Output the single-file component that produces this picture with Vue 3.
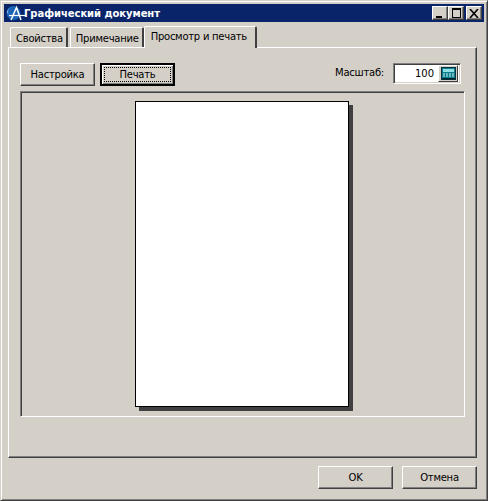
<template>
  <div class="window">
    <div class="titlebar">
      <svg class="logo" width="20" height="16" viewBox="0 0 20 16">
        <circle cx="7.500" cy="8" r="7" fill="#1b63b4" />
        <path d="M1 8a6.500 6.500 0 0 1 6-6.500a5 5 0 0 0-4.500 7z" fill="#7fb8ea" />
        <path d="M5 15L10.500 2.500L15 15" fill="none" stroke="#fff" stroke-width="1.500" />
        <path d="M3 10.500h16" stroke="#fff" stroke-width="1.200" />
      </svg>
      <span class="title">Графический документ</span>
      <div class="caption-btns">
        <button class="cap">
          <svg width="10" height="9" viewBox="0 0 10 9"><path d="M1 7h6v2H1z" fill="#000" /></svg>
        </button>
        <button class="cap">
          <svg width="11" height="10" viewBox="0 0 11 10"><path d="M1 0h9v10H1zM2 2v7h7V2z" fill="#000" fill-rule="evenodd" /></svg>
        </button>
        <button class="cap close">
          <svg width="10" height="9" viewBox="0 0 10 9"><path d="M1 0l8 9M9 0L1 9" stroke="#000" stroke-width="1.600" /></svg>
        </button>
      </div>
    </div>

    <div class="tabs">
      <div v-for="t in tabs" :key="t" class="tab" :class="{ active: t === active }">{{ t }}</div>
    </div>

    <div class="pane">
      <div class="toolbar">
        <button class="btn">Настройка</button>
        <button class="btn default"><span class="focus">Печать</span></button>
        <span class="scale-label">Масштаб:</span>
        <div class="scale">
          <span class="scale-value">100</span>
          <span class="calc">
            <svg width="15" height="13" viewBox="0 0 15 13">
              <rect x="0.500" y="0.500" width="14" height="12" fill="#0b7d8c" stroke="#03303c" />
              <rect x="2" y="2" width="11" height="3" fill="#8fdfe4" />
              <path d="M2 7h2M5 7h2M8 7h2M11 7h2M2 9h2M5 9h2M8 9h2M11 9h2" stroke="#c8f4f4" />
              <path d="M1 11.500h13" stroke="#022" />
            </svg>
          </span>
        </div>
      </div>
      <div class="preview">
        <div class="paper"></div>
      </div>
    </div>

    <div class="footer">
      <button class="btn">OK</button>
      <button class="btn">Отмена</button>
    </div>
  </div>
</template>

<script setup>
const tabs = ['Свойства', 'Примечание', 'Просмотр и печать']
const active = 'Просмотр и печать'
</script>

<style>
html, body { margin: 0; background: #d4d0c8; }
</style>

<style scoped>
.window {
  box-sizing: border-box;
  width: 488px;
  height: 501px;
  background: #d4d0c8;
  border: 1px solid;
  border-color: #d4d0c8 #404040 #404040 #d4d0c8;
  box-shadow: inset 1px 1px 0 #fff, inset -1px -1px 0 #808080;
  padding: 3px 3px 0;
  display: flex;
  flex-direction: column;
  font: 10px "DejaVu Sans", sans-serif;
  letter-spacing: -0.25px;
  color: #000;
}
.titlebar {
  height: 18px;
  flex: none;
  background: #0a246a;
  display: flex;
  align-items: center;
  padding-left: 2px;
  padding-right: 2px;
}
.logo { flex: none; margin-right: -2px; }
.title {
  color: #fff;
  font-weight: bold;
  font-size: 10px;
  letter-spacing: -0.05px;
}
.caption-btns { margin-left: auto; display: flex; }
.cap {
  box-sizing: border-box;
  width: 16px;
  height: 14px;
  padding: 0;
  background: #d4d0c8;
  border: 1px solid;
  border-color: #fff #404040 #404040 #fff;
  box-shadow: inset -1px -1px 0 #808080;
  display: flex;
  align-items: center;
  justify-content: center;
}
.cap.close { margin-left: 2px; }
.tabs {
  display: flex;
  align-items: flex-end;
  height: 25px;
  flex: none;
  margin-left: 6px;
  position: relative;
  z-index: 1;
}
.tab {
  box-sizing: border-box;
  height: 20px;
  margin-right: 2px;
  padding: 5px 3px 0 5px;
  border-top: 1px solid #fff;
  border-left: 1px solid #fff;
  border-right: 2px solid #404040;
  border-radius: 2px 2px 0 0;
  white-space: nowrap;
}
.tab:nth-child(2) { margin-right: 0; }
.tab.active {
  height: 22px;
  margin-bottom: -1px;
  padding: 4px 8px 0 6px;
  background: #d4d0c8;
}
.pane {
  box-sizing: border-box;
  width: 469px;
  height: 411px;
  flex: none;
  margin-left: 4px;
  border: 1px solid;
  border-color: #fff #404040 #404040 #fff;
  box-shadow: inset -1px -1px 0 #808080;
  padding: 15px 10px 0 11px;
  display: flex;
  flex-direction: column;
}
.toolbar {
  display: flex;
  align-items: flex-start;
  height: 28px;
  flex: none;
  gap: 5px;
}
.btn {
  box-sizing: border-box;
  width: 75px;
  height: 23px;
  padding: 0;
  font: inherit;
  letter-spacing: inherit;
  color: #000;
  background: #d4d0c8;
  border: 1px solid;
  border-color: #fff #404040 #404040 #fff;
  box-shadow: inset -1px -1px 0 #808080;
}
.btn.default {
  border: 2px solid #000;
  box-shadow: inset 1px 1px 0 #fff, inset -1px -1px 0 #808080;
  display: flex;
  align-items: center;
  justify-content: center;
}
.focus {
  box-sizing: border-box;
  width: 67px;
  height: 15px;
  border: 1px dotted #000;
  line-height: 13px;
}
.scale-label { margin-left: auto; margin-top: 4px; margin-right: 4px; }
.scale {
  box-sizing: border-box;
  width: 68px;
  height: 21px;
  background: #fff;
  border: 1px solid;
  border-color: #808080 #fff #fff #808080;
  box-shadow: inset 1px 1px 0 #404040, inset -1px -1px 0 #d4d0c8;
  display: flex;
  align-items: center;
  justify-content: flex-end;
  padding-right: 2px;
  margin-right: 5px;
}
.scale-value { margin-right: 4px; letter-spacing: 0; }
.calc {
  box-sizing: border-box;
  width: 20px;
  height: 17px;
  background: #d4d0c8;
  border: 1px solid;
  border-color: #fff #404040 #404040 #fff;
  display: flex;
  align-items: center;
  justify-content: center;
}
.preview {
  box-sizing: border-box;
  width: 445px;
  height: 326px;
  border: 1px solid;
  border-color: #808080 #fff #fff #808080;
  box-shadow: inset 1px 1px 0 #404040;
  display: flex;
  justify-content: center;
  align-items: flex-start;
  padding: 9px 1px 0 0;
}
.paper {
  box-sizing: border-box;
  width: 214px;
  height: 306px;
  background: #fff;
  border: 1px solid #000;
  box-shadow: 4px 4px 0 #404040;
}
.footer {
  display: flex;
  justify-content: flex-end;
  gap: 9px;
  padding: 8px 7px 0 0;
}
</style>
